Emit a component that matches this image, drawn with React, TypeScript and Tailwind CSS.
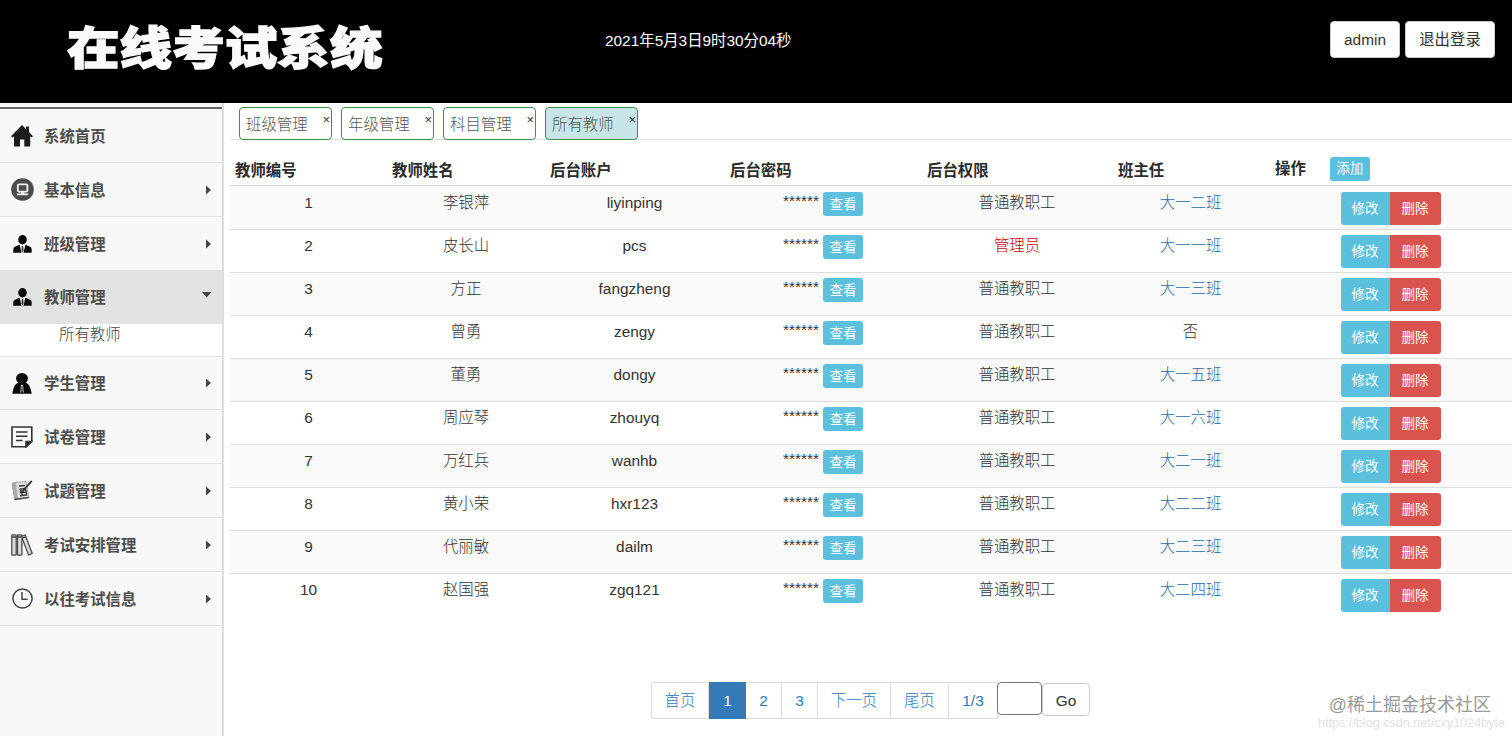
import React, { useState } from 'react';

interface MenuItem {
    name: string;
    icon: React.ReactNode;
    height: string;
    children?: string[];
}

interface Teacher {
    name: string;
    account: string;
    className?: string;
    isAdmin?: boolean;
}

const HomeIcon = () => (
    <svg width="22" height="22" viewBox="0 0 22 22" fill="#1c1c1c">
        <path d="M11 0 L15 4 V1.5 H18 V7 L22 11.3 L20.6 12.4 L19.2 11.3 V21.5 H13.3 V14.5 H9 V21.5 H3 V11.3 L1.4 12.4 L0 11.3 Z" />
    </svg>
);

const MonitorIcon = () => (
    <svg width="23" height="23" viewBox="0 0 23 23">
        <circle cx="11.5" cy="11.5" r="11.3" fill="#4c4c4c" />
        <rect x="6.8" y="6.3" width="9.6" height="7.4" rx="1.2" fill="none" stroke="#f3f3f3" strokeWidth="1.8" />
        <path d="M9.8 14.2 H13.4 V15.6 H17.2 V17.2 H5.9 V15.6 H9.8 Z" fill="#f3f3f3" />
    </svg>
);

const PersonIcon = () => (
    <svg width="19" height="18" viewBox="0 0 19 18" fill="#0a0a0a">
        <ellipse cx="9.5" cy="4.7" rx="4.3" ry="4.7" />
        <path d="M0.3 17.8 V14 Q0.4 12.2 2.5 11.4 L6.6 9.8 L8.5 17.8 Z" />
        <path d="M18.7 17.8 V14 Q18.6 12.2 16.5 11.4 L12.4 9.8 L10.5 17.8 Z" />
        <path d="M8.8 11 H10.2 L10.5 15.6 L9.5 17.4 L8.5 15.6 Z" fill="#333" />
    </svg>
);

const StudentIcon = () => (
    <svg width="20" height="21" viewBox="0 0 20 21" fill="#080808">
        <ellipse cx="10" cy="5.4" rx="5.9" ry="5.4" />
        <path d="M6.5 9.4 H13.5 C16.8 10.6 18 13.4 18.6 16 L19.8 20.8 H0.2 L1.4 16 C2 13.4 3.2 10.6 6.5 9.4 Z" />
        <path d="M9 11.6 L8.3 19.5 H9.2 L9.8 12 Z M11 11.6 L11.7 19.5 H10.8 L10.2 12 Z" fill="#ddd" />
    </svg>
);

const PaperIcon = () => (
    <svg width="22" height="22" viewBox="0 0 22 22" fill="none" stroke="#333" strokeWidth="1.6">
        <path d="M15 20.8 H1 V1 H20.8 V15" />
        <path d="M5 6 H16.5 M5 10.3 H16.5 M5 14.6 H11.5" strokeWidth="1.5" />
        <path d="M15 21 V15.6 H20.8 Z" fill="#222" />
    </svg>
);

const QuestionIcon = () => (
    <svg width="22" height="21" viewBox="0 0 22 21" fill="none" stroke="#555">
        <path d="M1 3 L15 1.5 L17.8 17.6 L3.6 19.6 Z" fill="#e2e2e2" stroke="#999" strokeWidth="0.9" />
        <path d="M1 3 L5 2.5 L7 19 L3.6 19.6 Z" fill="#aaa" stroke="none" />
        <path d="M3.6 19.4 L17.8 17.5" strokeWidth="1.6" />
        <path d="M8 6 L14 5.4 M8.3 9.2 L15 8.5 M8.6 12.6 L15.6 12 M9 15.8 L16 15.1 M14.6 9 L15.6 15 M9.5 9 L11.5 15.5" stroke="#3c3c3c" strokeWidth="1.5" />
        <path d="M20.8 0.8 L13.5 9 L11 12.5" stroke="#333" strokeWidth="1.8" />
    </svg>
);

const BooksIcon = () => (
    <svg width="22" height="22" viewBox="0 0 22 22" fill="#ddd" stroke="#4b4b4b" strokeWidth="1.3">
        <rect x="0.8" y="0.8" width="4.4" height="20.4" rx="0.8" />
        <rect x="6.5" y="0.8" width="4.4" height="20.4" rx="0.8" />
        <path d="M10.5 2.4 L14.2 1 L21.2 19.4 L17.6 21 Z" />
        <path d="M0.8 3 H5.2 M6.5 3 H10.9 M11.2 4.2 L14.8 2.8" />
    </svg>
);

const ClockIcon = () => (
    <svg width="21" height="21" viewBox="0 0 21 21" fill="none" stroke="#444">
        <circle cx="10.5" cy="10.5" r="9.6" strokeWidth="1.5" />
        <path d="M10 4 V11.2 H15.5" strokeWidth="1.5" />
    </svg>
);

const MENU: MenuItem[] = [
    { name: '系统首页', icon: <HomeIcon />, height: 'h-[54px]' },
    { name: '基本信息', icon: <MonitorIcon />, height: 'h-[54px]', children: [] },
    { name: '班级管理', icon: <PersonIcon />, height: 'h-[54px]', children: [] },
    { name: '教师管理', icon: <PersonIcon />, height: 'h-[53px]', children: ['所有教师'] },
    { name: '学生管理', icon: <StudentIcon />, height: 'h-[53px]', children: [] },
    { name: '试卷管理', icon: <PaperIcon />, height: 'h-[54px]', children: [] },
    { name: '试题管理', icon: <QuestionIcon />, height: 'h-[54px]', children: [] },
    { name: '考试安排管理', icon: <BooksIcon />, height: 'h-[54px]', children: [] },
    { name: '以往考试信息', icon: <ClockIcon />, height: 'h-[54px]', children: [] },
];

const TABS = ['班级管理', '年级管理', '科目管理', '所有教师'];

const TEACHERS: Teacher[] = [
    { name: '李银萍', account: 'liyinping', className: '大一二班' },
    { name: '皮长山', account: 'pcs', className: '大一一班', isAdmin: true },
    { name: '方正', account: 'fangzheng', className: '大一三班' },
    { name: '曾勇', account: 'zengy' },
    { name: '董勇', account: 'dongy', className: '大一五班' },
    { name: '周应琴', account: 'zhouyq', className: '大一六班' },
    { name: '万红兵', account: 'wanhb', className: '大二一班' },
    { name: '黄小荣', account: 'hxr123', className: '大二二班' },
    { name: '代丽敏', account: 'dailm', className: '大二三班' },
    { name: '赵国强', account: 'zgq121', className: '大二四班' },
];

const PAGES = [
    { label: '首页', width: 'w-[57px]' },
    { label: '1', width: 'w-[37px]' },
    { label: '2', width: 'w-[36px]' },
    { label: '3', width: 'w-[36px]' },
    { label: '下一页', width: 'w-[73px]' },
    { label: '尾页', width: 'w-[58px]' },
    { label: '1/3', width: 'w-[49px]' },
];

const COLUMNS = 'grid grid-cols-[157px_158px_179px_198px_190px_157px_1fr]';

const Header = () => (
    <header className="flex h-[103px] shrink-0 items-start bg-black text-white">
        <h1 className="ml-[67px] mt-[24px] w-[538px] origin-top scale-y-[0.86] whitespace-nowrap text-[52.6px] font-black leading-[60px] text-[#fafafa] [-webkit-text-stroke:1.5px_#fafafa]">
            在线考试系统
        </h1>
        <span className="mt-[30px] leading-[22px]">2021年5月3日9时30分04秒</span>
        <div className="ml-auto mr-[17px] mt-[21px] flex gap-[5px] text-[#333]">
            <button className="h-[37px] w-[70px] rounded-[4px] border border-[#ccc] bg-white">admin</button>
            <button className="h-[37px] w-[90px] rounded-[4px] border border-[#ccc] bg-white pt-px">退出登录</button>
        </div>
    </header>
);

const Sidebar = () => {
    const [openItem, setOpenItem] = useState('教师管理');

    return (
        <nav className="w-[224px] shrink-0 border-r-2 border-[#dedede] bg-[#f8f8f8] pt-1">
            <div className="h-[2px] bg-[#666]" />
            {MENU.map((item) => {
                const isOpen = item.name === openItem;
                return (
                    <div key={item.name}>
                        <div
                            onClick={() => item.children && setOpenItem(isOpen ? '' : item.name)}
                            className={`flex cursor-pointer items-center border-b border-[#e4e4e4] ${item.height} ${isOpen ? 'bg-[#e3e3e3]' : ''}`}
                        >
                            <span className="flex w-[44px] justify-center">{item.icon}</span>
                            <span className="pt-[2px] font-bold text-[#4d4d4d]">{item.name}</span>
                            {item.children && (
                                <svg width="10" height="10" viewBox="0 0 10 10" fill="#444" className={`ml-auto ${isOpen ? 'mr-[10px] mb-[2px]' : 'mr-[9px]'}`}>
                                    {isOpen ? <path d="M0 1 H9.4 L4.7 6.4 Z" /> : <path d="M3 0.4 V9.6 L8 5 Z" />}
                                </svg>
                            )}
                        </div>
                        {isOpen && item.children?.map((child) => (
                            <div key={child} className="h-[33px] border-b border-[#e4e4e4] bg-white pl-[59px] font-light leading-[22px] text-[#444]">
                                {child}
                            </div>
                        ))}
                    </div>
                );
            })}
        </nav>
    );
};

const TabBar = () => {
    const [active, setActive] = useState('所有教师');

    return (
        <div className="flex h-[37px] items-end gap-[9px] border-b border-[#dbe5dc] pl-[9px]">
            {TABS.map((tab) => (
                <div
                    key={tab}
                    onClick={() => setActive(tab)}
                    className={`-mb-px flex h-[33px] w-[93px] cursor-pointer justify-between rounded-[4px] border border-[#3f8d4f] pl-[6px] pr-px font-light text-[#555] ${tab === active ? 'bg-[#c8e6e8]' : 'bg-white'}`}
                >
                    <span className="leading-[33px]">{tab}</span>
                    <span className="mt-[3px] text-[13px] leading-[18px] text-[#333]">×</span>
                </div>
            ))}
        </div>
    );
};

const TeacherTable = () => (
    <div>
        <div className={`${COLUMNS} h-[46px] border-b border-[#d6d6d6] pt-[20px] font-bold leading-[22px] text-[#2b2b2b]`}>
            <span className="pl-[5px]">教师编号</span>
            <span className="pl-[5px]">教师姓名</span>
            <span className="pl-[5px]">后台账户</span>
            <span className="pl-[6px]">后台密码</span>
            <span className="pl-[5px]">后台权限</span>
            <span className="pl-[6px]">班主任</span>
            <span className="-mt-[3px] flex h-6 items-center pl-[6px]">
                操作
                <button className="ml-[24px] h-[24px] w-[40px] rounded-[3px] bg-[#5bc0de] text-[13.5px] font-normal text-white">添加</button>
            </span>
        </div>
        {TEACHERS.map((teacher, index) => (
            <div
                key={teacher.account}
                className={`${COLUMNS} h-[43px] pt-[6px] text-center font-light leading-[21px] ${index > 0 ? 'border-t border-[#ddd] !pt-[5px]' : ''} ${index % 2 === 0 ? 'bg-[#f9f9f9]' : 'bg-white'}`}
            >
                <span>{index + 1}</span>
                <span>{teacher.name}</span>
                <span>{teacher.account}</span>
                <span className="flex items-start justify-center gap-[4px]">
                    <span className="-mt-[2px]">******</span>
                    <button className="h-[24px] w-[40px] rounded-[3px] bg-[#5bc0de] text-[13.5px] font-normal text-white">查看</button>
                </span>
                {teacher.isAdmin
                    ? <span className="text-[#c9060c]">管理员</span>
                    : <span>普通教职工</span>}
                {teacher.className
                    ? <span className="text-[#2a68a3]">{teacher.className}</span>
                    : <span>否</span>}
                <span className="flex items-start justify-center text-[13.5px] font-normal text-white">
                    <button className="h-[33px] w-[49px] rounded-l-[3px] bg-[#5bc0de]">修改</button>
                    <button className="h-[33px] w-[51px] rounded-r-[3px] bg-[#d9534f]">删除</button>
                </span>
            </div>
        ))}
    </div>
);

const Pagination = () => {
    const [page, setPage] = useState('');

    return (
        <div className="ml-[421px] mt-[66px] flex items-start font-light">
            <div className="flex h-[37px] rounded-l-[4px] border border-r-0 border-[#ddd] bg-white">
                {PAGES.map(({ label, width }) => (
                    <button
                        key={label}
                        className={`${width} ${label === '1' ? '-my-px bg-[#337ab7] text-white' : 'border-r border-[#ddd] text-[#337ab7]'}`}
                    >
                        {label}
                    </button>
                ))}
            </div>
            <input
                value={page}
                onChange={(e) => setPage(e.target.value)}
                className="-ml-px h-[33px] w-[45px] rounded-[4px] border border-[#767676] bg-white px-1"
            />
            <button className="mt-[1px] h-[33px] w-[48px] rounded-[4px] border border-[#ccc] bg-white pt-[2px]">Go</button>
        </div>
    );
};

const App: React.FC = () => {
    return (
        <div className="relative flex h-[736px] w-[1512px] flex-col overflow-hidden bg-white font-['Liberation_Sans','Noto_Sans_CJK_SC',sans-serif] text-[15.4px] text-[#333]">
            <Header />
            <div className="flex min-h-0 flex-1">
                <Sidebar />
                <main className="min-w-0 flex-1 pl-[6px]">
                    <TabBar />
                    <TeacherTable />
                    <Pagination />
                </main>
            </div>

            {/* Watermark */}
            <div className="absolute bottom-[6px] right-[7px] whitespace-nowrap text-right">
                <p className="mr-[14px] text-[18px] leading-[22px] text-[#999]">@稀土掘金技术社区</p>
                <p className="text-[12.6px] leading-[14px] text-[#e2e2e2]">https://blog.csdn.net/cxy1024byte</p>
            </div>
        </div>
    );
};

export default App;
